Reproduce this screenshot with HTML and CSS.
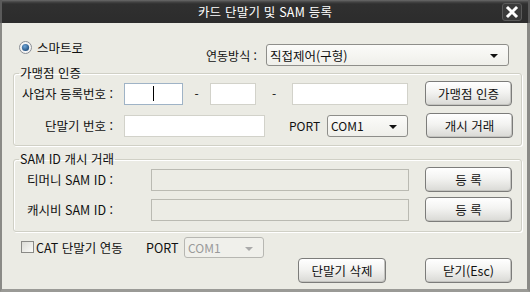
FILE: index.html
```html
<!DOCTYPE html>
<html lang="ko">
<head>
<meta charset="utf-8">
<link rel="stylesheet" href="styles.css">
</head>
<body>
<div class="window">
  <div class="titlebar">
    <span class="title">카드 단말기 및 SAM 등록</span>
    <span class="close">
      <svg width="14" height="14" viewBox="0 0 14 14"><path d="M3 3 L11 11 M11 3 L3 11" stroke="#fff" stroke-width="3" stroke-linecap="square"/></svg>
    </span>
  </div>
  <div class="content">
    <div class="top-row">
      <label class="radio">
        <svg width="13" height="13" viewBox="0 0 13 13">
          <defs><radialGradient id="rg" cx="0.4" cy="0.35" r="0.7"><stop offset="0" stop-color="#6fa6d8"/><stop offset="1" stop-color="#1c4a7a"/></radialGradient></defs>
          <circle cx="6.5" cy="6.5" r="6" fill="#f4f4f4" stroke="#8a8f95"/>
          <circle cx="6.5" cy="6.5" r="3.6" fill="url(#rg)"/>
        </svg>
        <span>스마트로</span>
      </label>
      <div class="link-mode">
        <span class="lbl">연동방식 :</span>
        <div class="combo wide"><span>직접제어(구형)</span><i class="arrow"></i></div>
      </div>
    </div>

    <fieldset class="group g1">
      <legend>가맹점 인증</legend>
      <div class="row">
        <span class="rlabel">사업자 등록번호 :</span>
        <div class="input w59 focus"><span class="caret"></span></div>
        <span class="dash d1">-</span>
        <div class="input w46"></div>
        <span class="dash d2">-</span>
        <div class="input w116"></div>
        <button class="btn b1">가맹점 인증</button>
      </div>
      <div class="row r2">
        <span class="rlabel">단말기 번호 :</span>
        <div class="input w141"></div>
        <span class="port">PORT</span>
        <div class="combo small"><span>COM1</span><i class="arrow"></i></div>
        <button class="btn b2">개시 거래</button>
      </div>
    </fieldset>

    <fieldset class="group g2">
      <legend>SAM ID 개시 거래</legend>
      <div class="row">
        <span class="rlabel">티머니 SAM ID :</span>
        <div class="input disabled w258"></div>
        <button class="btn b3">등 록</button>
      </div>
      <div class="row r2b">
        <span class="rlabel">캐시비 SAM ID :</span>
        <div class="input disabled w258"></div>
        <button class="btn b3">등 록</button>
      </div>
    </fieldset>

    <div class="cat-row">
      <span class="check"></span>
      <span class="cat-lbl">CAT 단말기 연동</span>
      <span class="port2">PORT</span>
      <div class="combo small dis"><span>COM1</span><i class="arrow"></i></div>
    </div>

    <div class="btn-row">
      <button class="btn del">단말기 삭제</button>
      <button class="btn closeb">닫기(Esc)</button>
    </div>
  </div>
</div>
</body>
</html>
```
FILE: styles.css
```css
* { box-sizing: border-box; }
html, body { margin: 0; padding: 0; }
body {
  width: 530px; height: 292px; overflow: hidden;
  font-family: "Noto Sans CJK KR", "Noto Sans", sans-serif;
  font-size: 12px; color: #111;
  background: #ebebe4;
}
.window {
  width: 530px; height: 292px;
  display: flex; flex-direction: column;
  background: #ebebe4;
  border-left: 2px solid #8a8a86;
  border-right: 3px solid #8a8a86;
  border-bottom: 3px solid #9a9a96;
}
.titlebar {
  height: 23px; flex: none;
  margin: 0 -3px 0 -2px;
  background: linear-gradient(#6a6a6a 0, #444 2px, #303030 4px, #2c2c2c 100%);
  border-left: 2px solid #5a5a5a;
  border-right: 2px solid #5a5a5a;
  display: flex; align-items: center; justify-content: center;
  position: relative;
}
.title { color: #fff; font-size: 12.5px; line-height: 23px; letter-spacing: 0.2px; }
.close {
  position: absolute; right: 6px; top: 3px;
  width: 20px; height: 18px;
  background: #3a3a3a; border: 1px solid #5a5a5a; border-radius: 3px;
  display: flex; align-items: center; justify-content: center;
}
.content { flex: 1; padding: 0 7px 0 11px; display: flex; flex-direction: column; }

.top-row { display: flex; height: 43px; }
.radio { display: flex; align-items: center; gap: 5px; margin: 16px 0 0 6px; height: 16px; font-size: 12.5px; }
.link-mode { display: flex; align-items: center; margin: 21px 0 0 123px; height: 22px; }
.link-mode .lbl { width: 60px; }
.combo {
  display: flex; align-items: center; position: relative;
  height: 22px; border: 1px solid #8e8e8a; border-radius: 3px;
  background: linear-gradient(#fbfbf9, #efefea);
  padding-left: 3px;
}
.combo.wide { width: 243px; font-size: 12.5px; }
.combo.small { width: 81px; height: 22px; }
.combo.dis { color: #9a9a9a; border-color: #b7b7b2; background: #f0f0eb; width: 80px; height: 21px; }
.arrow {
  position: absolute; right: 10px; top: 9px;
  width: 0; height: 0;
  border-left: 4px solid transparent; border-right: 4px solid transparent;
  border-top: 4px solid #111;
}
.combo.dis .arrow { border-top-color: #aaa; }

.group {
  margin: 0; padding: 1px 0 0 0;
  border: 1px solid #d0d0c6; border-radius: 3px;
  box-shadow: inset 1px 1px 0 #fff, 1px 1px 0 #fff;
  width: 509px;
}
.group legend { padding: 0 1px; margin-left: 5px; line-height: 14px; font-size: 12.5px; }
.g1 { height: 80px; }
.g2 { margin-top: 6px; height: 80px; }
.row { display: flex; align-items: center; height: 25px; }
.r2 { margin-top: 7px; }
.r2b { margin-top: 5px; }
.rlabel { width: 99px; text-align: right; flex: none; font-size: 12.5px; white-space: nowrap; }
.input { height: 22px; background: #fff; border: 1px solid #d2d2ca; flex: none; position: relative; }
.input.focus { border-color: #9fb3c6; }
.caret { position: absolute; left: 28px; top: 2px; width: 1px; height: 15px; background: #000; }
.input.disabled { background: #ecece5; border-color: #babab2; }
.g1 .input { margin-left: 0; }
.g1 .row > .input:first-of-type { margin-left: 11px; }
.w59 { width: 59px; }
.w46 { width: 46px; }
.w116 { width: 116px; }
.w141 { width: 141px; }
.w258 { width: 258px; margin-left: 38px; }
.dash { text-align: center; flex: none; }
.d1 { width: 27px; }
.d2 { width: 36px; }
.port { margin-left: 24px; width: 38px; }
.btn {
  font-family: inherit; font-size: 12.5px; color: #111;
  height: 25px; width: 87px; padding: 0;
  border: 1px solid #7c7c7a; border-radius: 4px;
  background: linear-gradient(#ffffff 0%, #f3f3f1 45%, #d9d9d5 100%);
  box-shadow: inset -1px -1px 0 #c4c4c0;
}
.b1 { margin-left: 17px; }
.b2 { margin-left: 18px; }
.b3 { margin-left: 16px; }

.cat-row { display: flex; align-items: center; height: 22px; margin-top: 4px; }
.check { width: 13px; height: 12px; margin-left: 8px; border: 1px solid #8a8a86; background: linear-gradient(135deg, #dcdcd6, #fbfbf8); }
.cat-lbl { margin-left: 2px; width: 110px; font-size: 12.5px; }
.port2 { width: 38px; font-size: 12.5px; }

.btn-row { display: flex; margin-top: 0; }
.del { margin-left: 285px; width: 88px; }
.closeb { margin-left: 39px; }
```
